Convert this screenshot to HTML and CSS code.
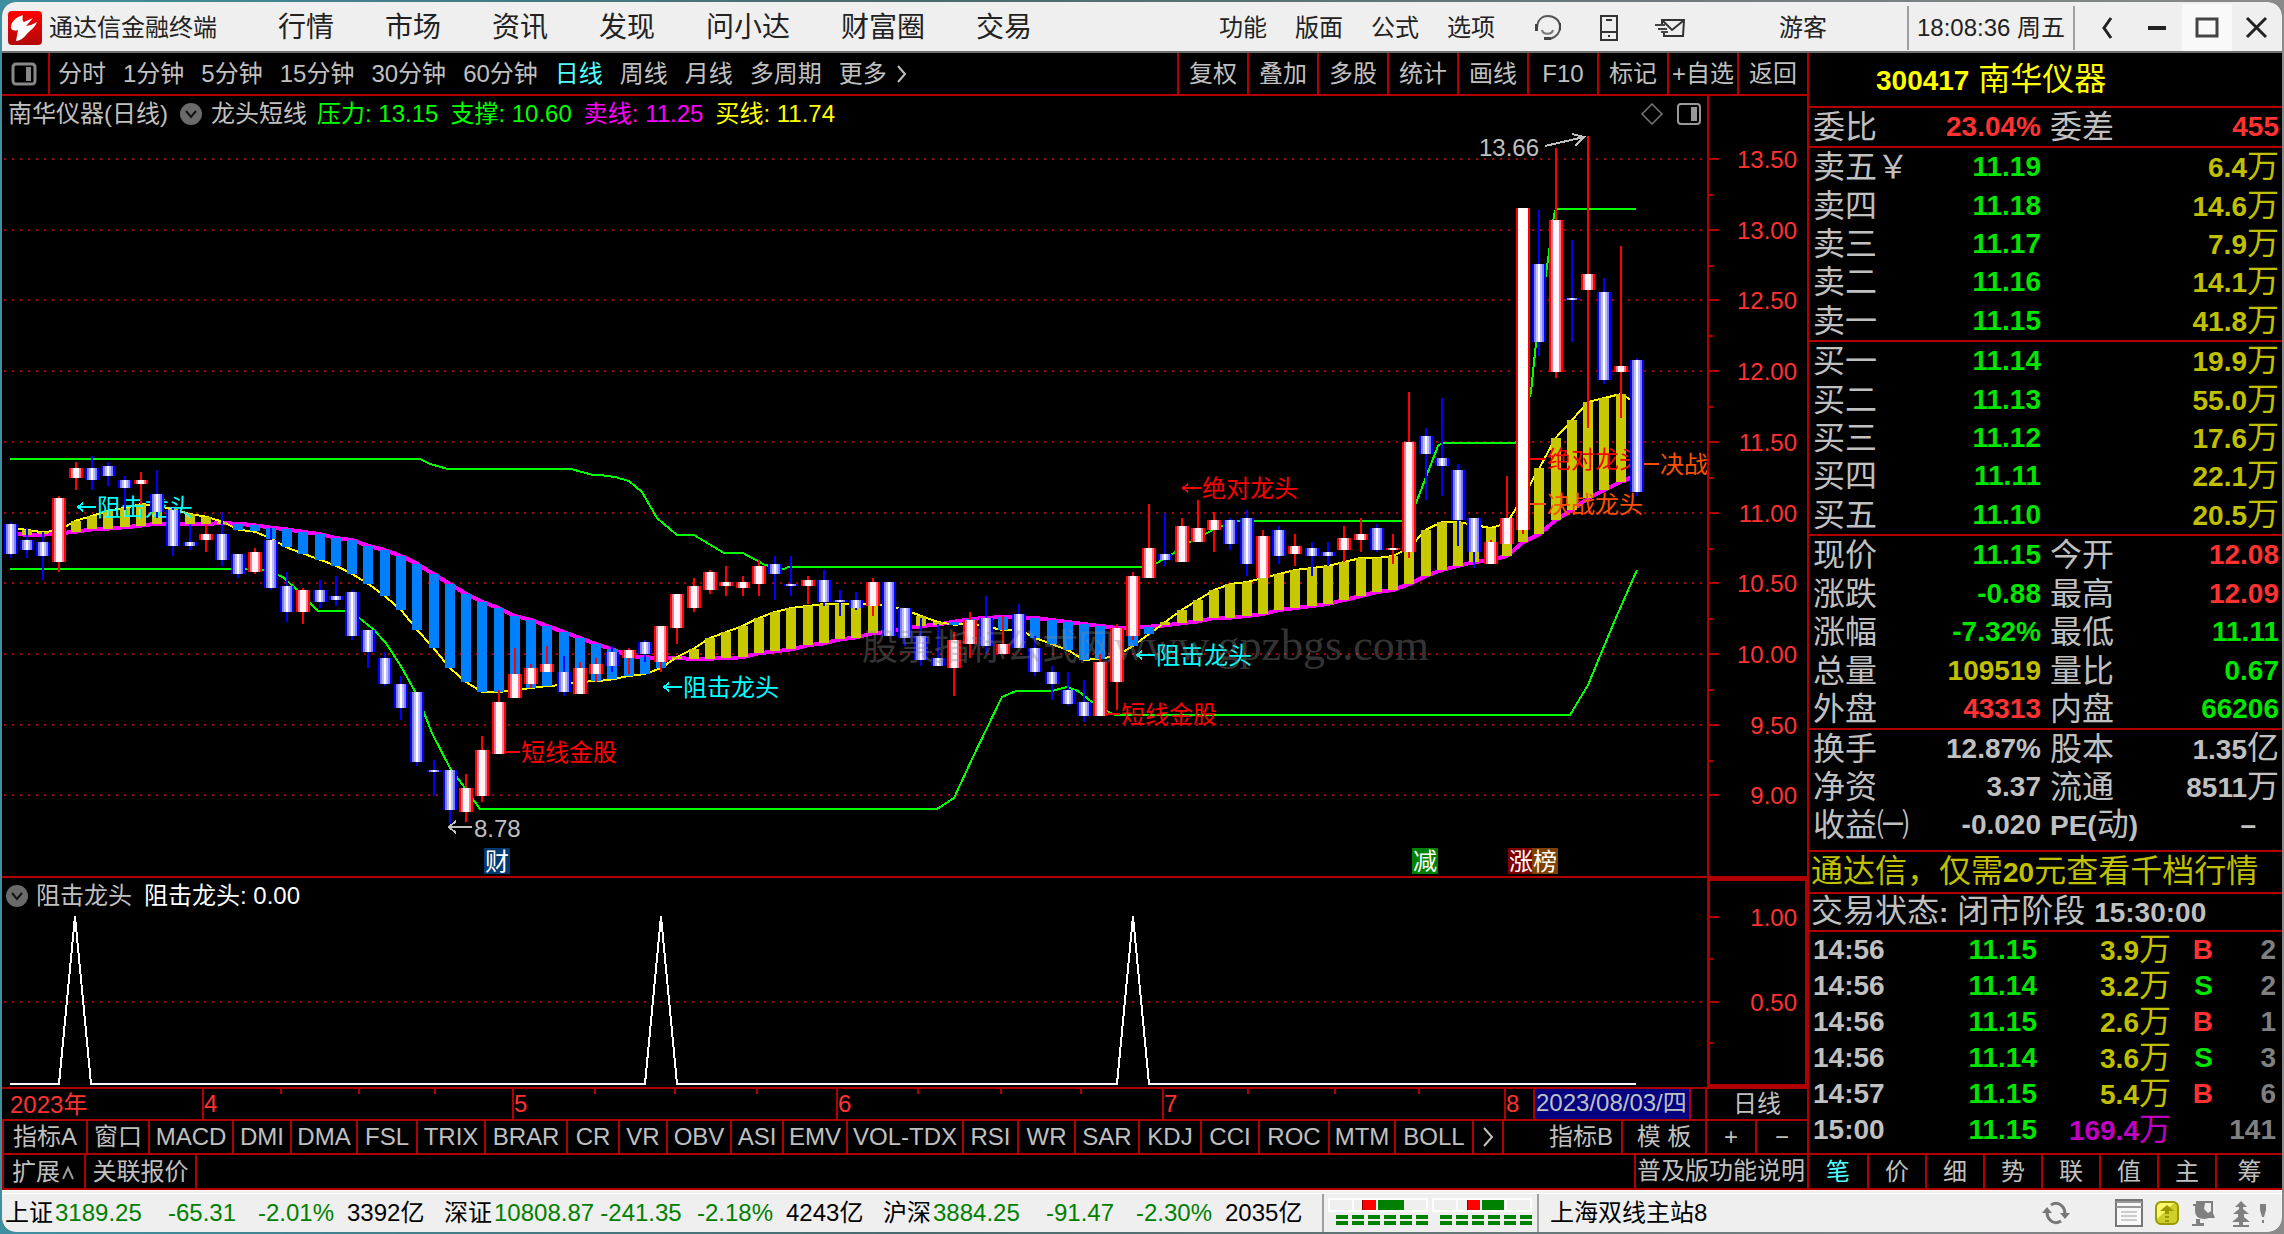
FILE: index.html
```html
<!DOCTYPE html>
<html lang="zh-CN">
<head>
<meta charset="utf-8">
<title>通达信金融终端</title>
<link rel="stylesheet" href="styles.css">
</head>
<body>
<div class="window">
  <header class="titlebar">
    <svg class="logo" viewBox="0 0 34 34"><defs><linearGradient id="lg" x1="0" y1="0" x2="0" y2="1"><stop offset="0" stop-color="#f00"/><stop offset="1" stop-color="#b00808"/></linearGradient></defs><rect width="34" height="34" rx="4" fill="url(#lg)"/><path d="M15 4C8 6 3 11 3 16c0 4 4 4 7 3l-2 11c3 0 8-3 10-6 4-5 9-7 11-13l-6 3-5 1 7-8-9 4c-1 0-2-3-1-7z" fill="#fff"/></svg>
    <span class="app-name">通达信金融终端</span>
    <nav class="main-menu">
      <button>行情</button><button>市场</button><button>资讯</button><button>发现</button><button>问小达</button><button>财富圈</button><button>交易</button>
    </nav>
    <nav class="sub-menu">
      <button>功能</button><button>版面</button><button>公式</button><button>选项</button>
    </nav>
    <div class="title-icons">
      <button aria-label="客服"><svg viewBox="0 0 30 28" width="30" height="28"><path d="M4 15C4 6 9 2 15 2s12 4 12 11c0 6-4 10-10 12" fill="none" stroke="#555" stroke-width="2"/><path d="M9 16c1 5 10 5 11 0" fill="none" stroke="#777" stroke-width="2"/><path d="M2 10h3v7H2zM26 9h2v7h-2zM11 23h7v3h-7z" fill="#444"/></svg></button>
      <button aria-label="手机"><svg viewBox="0 0 30 28" width="30" height="28"><path d="M7 2h16v24H7zM7 18h16M12 6h6M14 22h2" fill="none" stroke="#333" stroke-width="2"/></svg></button>
      <button aria-label="邮件"><svg viewBox="0 0 30 28" width="30" height="28"><path d="M7 10V6h22l-1 16H9v-3M8 7l9 9 11-9" fill="none" stroke="#333" stroke-width="2"/><path d="M0 10h10v2H0zM3 14h9v2H3zM6 17h7v2H6z" fill="#444"/></svg></button>
    </div>
    <button class="user">游客</button>
    <time class="clock">18:08:36 周五</time>
    <div class="win-buttons">
      <button aria-label="收起"><svg viewBox="0 0 24 24" width="24" height="24"><path d="M16 2L9 12l7 10" fill="none" stroke="#222" stroke-width="3"/></svg></button>
      <button aria-label="最小化"><svg viewBox="0 0 24 24" width="24" height="24"><path d="M3 12h18" stroke="#222" stroke-width="4"/></svg></button>
      <button aria-label="最大化" class="hot"><svg viewBox="0 0 24 24" width="24" height="24"><path d="M2 3h20v17H2z" fill="none" stroke="#444" stroke-width="3"/></svg></button>
      <button aria-label="关闭"><svg viewBox="0 0 24 24" width="24" height="24"><path d="M2 2l19 19M21 2L2 21" stroke="#222" stroke-width="3"/></svg></button>
    </div>
  </header>

  <main class="body">
    <section class="left">
      <div class="toolbar">
        <button class="panel-toggle" aria-label="侧栏"><svg viewBox="0 0 26 24" width="26" height="24"><rect x="2" y="2" width="22" height="20" rx="3" fill="none" stroke="#888" stroke-width="3"/><path d="M15 5h5v14h-5z" fill="#888"/></svg></button>
        <nav class="periods">
          <button>分时</button><button>1分钟</button><button>5分钟</button><button>15分钟</button><button>30分钟</button><button>60分钟</button><button class="on">日线</button><button>周线</button><button>月线</button><button>多周期</button><button class="more">更多<svg viewBox="0 0 12 24" width="12" height="24"><path d="M3 4l7 8-7 8" fill="none" stroke="#c0c0c0" stroke-width="2"/></svg></button>
        </nav>
        <nav class="tools">
          <button>复权</button><button>叠加</button><button>多股</button><button>统计</button><button>画线</button><button>F10</button><button>标记</button><button>+自选</button><button>返回</button>
        </nav>
      </div>

      <div class="pane pane-main">
        <svg class="chart" id="kline" role="img" aria-label="南华仪器日线图"></svg>
        <div class="pane-head">
          <span>南华仪器(日线)</span>
          <button class="fold" aria-label="指标菜单"><svg viewBox="0 0 22 22" width="22" height="22"><circle cx="11" cy="11" r="11" fill="#6a6a6a"/><path d="M6 8l5 6 5-6" fill="none" stroke="#111" stroke-width="2"/></svg></button>
          <span>龙头短线</span>
          <span class="v1">压力: 13.15</span><span class="v1 next">支撑: 10.60</span><span class="v2 next">卖线: 11.25</span><span class="v3 next">买线: 11.74</span>
          <span class="head-icons">
            <svg viewBox="0 0 22 22" width="22" height="22"><path d="M11 1l10 10-10 10L1 11z" fill="none" stroke="#777" stroke-width="1.500"/></svg>
            <svg viewBox="0 0 24 22" width="24" height="22"><rect x="1" y="1" width="22" height="20" rx="3" fill="none" stroke="#999" stroke-width="2"/><path d="M14 4h6v14h-6z" fill="#999"/></svg>
          </span>
        </div>
      </div>

      <div class="pane pane-sub">
        <svg class="chart" id="signal" role="img" aria-label="阻击龙头指标"></svg>
        <div class="pane-head sub">
          <button class="fold" aria-label="指标菜单"><svg viewBox="0 0 22 22" width="22" height="22"><circle cx="11" cy="11" r="11" fill="#6a6a6a"/><path d="M6 8l5 6 5-6" fill="none" stroke="#111" stroke-width="2"/></svg></button>
          <span>阻击龙头</span><span class="v4 next">阻击龙头: 0.00</span>
        </div>
      </div>

      <div class="dates">
        <svg class="chart" id="dates"></svg>
        <button class="cycle">日线</button>
      </div>

      <div class="strip">
        <button class="w84">指标A</button><button class="w62">窗口</button><button class="w84">MACD</button><button class="w58">DMI</button><button class="w66">DMA</button><button class="w60">FSL</button><button class="w68">TRIX</button><button class="w82">BRAR</button><button class="w52">CR</button><button class="w48">VR</button><button class="w64">OBV</button><button class="w52">ASI</button><button class="w64">EMV</button><button class="w116">VOL-TDX</button><button class="w55">RSI</button><button class="w57">WR</button><button class="w64">SAR</button><button class="w62">KDJ</button><button class="w58">CCI</button><button class="w70">ROC</button><button class="w66">MTM</button><button class="w78">BOLL</button><button class="w30" aria-label="更多指标"><svg viewBox="0 0 12 24" width="12" height="24"><path d="M2 3l8 9-8 9" fill="none" stroke="#c0c0c0" stroke-width="2"/></svg></button><button class="grow">指标B</button><button class="w84">模 板</button><button class="w50">+</button><button class="w50 last">−</button>
      </div>
      <div class="strip ext">
        <button class="w82">扩展<svg viewBox="0 0 16 24" width="16" height="24"><path d="M3 19l5-11 5 11" fill="none" stroke="#999" stroke-width="2"/></svg></button><button class="w111">关联报价</button><a class="help" href="#help">普及版功能说明</a>
      </div>
    </section>

    <aside class="quote">
      <h1><b>300417</b> 南华仪器</h1>
      <table class="box one"><tr><th>委比</th><td class="r">23.04%</td><th>委差</th><td class="r">455</td></tr></table>
      <table class="box">
        <tr><th>卖五￥</th><td class="g">11.19</td><th></th><td class="y">6.4<i>万</i></td></tr>
        <tr><th>卖四</th><td class="g">11.18</td><th></th><td class="y">14.6<i>万</i></td></tr>
        <tr><th>卖三</th><td class="g">11.17</td><th></th><td class="y">7.9<i>万</i></td></tr>
        <tr><th>卖二</th><td class="g">11.16</td><th></th><td class="y">14.1<i>万</i></td></tr>
        <tr><th>卖一</th><td class="g">11.15</td><th></th><td class="y">41.8<i>万</i></td></tr>
      </table>
      <table class="box">
        <tr><th>买一</th><td class="g">11.14</td><th></th><td class="y">19.9<i>万</i></td></tr>
        <tr><th>买二</th><td class="g">11.13</td><th></th><td class="y">55.0<i>万</i></td></tr>
        <tr><th>买三</th><td class="g">11.12</td><th></th><td class="y">17.6<i>万</i></td></tr>
        <tr><th>买四</th><td class="g">11.11</td><th></th><td class="y">22.1<i>万</i></td></tr>
        <tr><th>买五</th><td class="g">11.10</td><th></th><td class="y">20.5<i>万</i></td></tr>
      </table>
      <table class="box">
        <tr><th>现价</th><td class="g">11.15</td><th>今开</th><td class="r">12.08</td></tr>
        <tr><th>涨跌</th><td class="g">-0.88</td><th>最高</th><td class="r">12.09</td></tr>
        <tr><th>涨幅</th><td class="g">-7.32%</td><th>最低</th><td class="g">11.11</td></tr>
        <tr><th>总量</th><td class="y">109519</td><th>量比</th><td class="g">0.67</td></tr>
        <tr><th>外盘</th><td class="r">43313</td><th>内盘</th><td class="g">66206</td></tr>
      </table>
      <table class="box tall">
        <tr><th>换手</th><td>12.87%</td><th>股本</th><td>1.35<i>亿</i></td></tr>
        <tr><th>净资</th><td>3.37</td><th>流通</th><td>8511<i>万</i></td></tr>
        <tr><th>收益㈠</th><td>-0.020</td><th><b>PE(</b>动<b>)</b></th><td class="dash">–</td></tr>
      </table>
      <a class="promo" href="#level2">通达信，仅需<b>20</b>元查看千档行情</a>
      <p class="state">交易状态<b>:</b> 闭市阶段 <b>15:30:00</b></p>
      <table class="ticks">
        <tr><td>14:56</td><td class="g">11.15</td><td class="y">3.9<i>万</i></td><td class="r">B</td><td>2</td></tr>
        <tr><td>14:56</td><td class="g">11.14</td><td class="y">3.2<i>万</i></td><td class="g">S</td><td>2</td></tr>
        <tr><td>14:56</td><td class="g">11.15</td><td class="y">2.6<i>万</i></td><td class="r">B</td><td>1</td></tr>
        <tr><td>14:56</td><td class="g">11.14</td><td class="y">3.6<i>万</i></td><td class="g">S</td><td>3</td></tr>
        <tr><td>14:57</td><td class="g">11.15</td><td class="y">5.4<i>万</i></td><td class="r">B</td><td>6</td></tr>
        <tr><td>15:00</td><td class="g">11.15</td><td class="m">169.4<i>万</i></td><td></td><td>141</td></tr>
      </table>
      <nav class="quote-tabs">
        <button class="on">笔</button><button>价</button><button>细</button><button>势</button><button>联</button><button>值</button><button>主</button><button>筹</button>
      </nav>
    </aside>
  </main>

  <footer class="status">
    <div class="index"><span>上证</span><span class="dn">3189.25</span><span class="dn mid">-65.31</span><span class="dn mid">-2.01%</span><span>3392亿</span></div>
    <div class="index"><span>深证</span><span class="dn">10808.87</span><span class="dn mid">-241.35</span><span class="dn mid">-2.18%</span><span>4243亿</span></div>
    <div class="index"><span>沪深</span><span class="dn">3884.25</span><span class="dn mid">-91.47</span><span class="dn mid">-2.30%</span><span>2035亿</span></div>
    <div class="meters">
      <svg viewBox="0 0 100 32" width="100" height="32" shape-rendering="crispEdges"><path d="M1 2h98v12H1zM25 2v12" fill="none" stroke="#fff" stroke-width="2"/><path d="M34 3h1v10h-1z" fill="#800"/><path d="M35 3h13v10H35z" fill="#f00"/><path d="M50 3h26v10H50z" fill="#008000"/><path d="M8 20h92M8 26h92" stroke="#008000" stroke-width="4" stroke-dasharray="12 4"/></svg>
      <svg viewBox="0 0 100 32" width="100" height="32" shape-rendering="crispEdges"><path d="M1 2h98v12H1zM25 2v12" fill="none" stroke="#fff" stroke-width="2"/><path d="M35 3h1v10h-1z" fill="#800"/><path d="M36 3h12v10H36z" fill="#f00"/><path d="M50 3h22v10H50z" fill="#008000"/><path d="M74 2v12" stroke="#fff" stroke-width="2"/><path d="M8 20h92M8 26h92" stroke="#008000" stroke-width="4" stroke-dasharray="12 4"/></svg>
    </div>
    <span class="server">上海双线主站8</span>
    <div class="tray">
      <button class="sync" aria-label="刷新"><svg viewBox="0 0 28 24" width="28" height="24"><path d="M9 4q6-4 11 1 3 3 3 8M5 11q0 5 3 8 5 5 11 1" fill="none" stroke="#777" stroke-width="3"/><path d="M18 12h10l-5 6zM0 12h10L5 6z" fill="#777"/></svg></button>
      <button aria-label="列表"><svg viewBox="0 0 28 28" width="28" height="28"><path d="M1 1h26v26H1z" fill="#f8f8f8" stroke="#777" stroke-width="2"/><path d="M1 3h26M1 8h26" stroke="#999" stroke-width="2"/><path d="M6 13h16M6 17h16M6 21h16" stroke="#ccc" stroke-width="2"/></svg></button>
      <button aria-label="升级"><svg viewBox="0 0 26 28" width="26" height="28"><rect x="2" y="3" width="22" height="22" rx="5" fill="#cfcf2c" stroke="#999a00" stroke-width="2"/><path d="M3 20V7l3-3h14z" fill="#fbf86a"/><path d="M13 6l7 6h-5v3h-4v-3H6zM11 17h4v2h-4zM11 21h4v2h-4z" fill="#999a00"/></svg></button>
      <button aria-label="信号"><svg viewBox="0 0 26 28" width="26" height="28"><path d="M5 2h17v12l2 5h-6l-4 1c-8 0-10-4-10-9V7H2V5h3zM5 20h4v4h4v3H1v-2h4z" fill="#808080"/><path d="M14 4h6v8l-3 2-4-4z" fill="#eee"/></svg></button>
      <button aria-label="置顶"><svg viewBox="0 0 26 28" width="26" height="28"><path d="M13 2l6 6h-4v2l6 5h-5v3l6 5h-7v3h6v2H5v-2h6v-3H4l6-5v-3H5l6-5V8H7z" fill="#808080"/></svg></button>
      <button class="alert" aria-label="提醒"><svg viewBox="0 0 8 28" width="8" height="28"><path d="M1 5h6v6L5 18H3L1 11zM3 21h2v3H3z" fill="#808080"/></svg></button>
    </div>
  </footer>
</div>
<script src="script.js"></script>
</body>
</html>
```
FILE: styles.css
```css
* { box-sizing: border-box; margin: 0; padding: 0; }
html { height: 100%; }
body {
  min-height: 100vh;
  display: flex;
  padding: 2px;
  background: linear-gradient(90deg, #3f8fa0, #4a6a6c 40%, #8a8a8a);
  font: 24px/32px "Liberation Sans", "Noto Sans CJK SC", sans-serif;
  color: #c0c0c0;
}
button { background: none; border: 0; font: inherit; color: inherit; white-space: nowrap; cursor: pointer; }
a { color: inherit; text-decoration: none; white-space: nowrap; }
svg { display: block; flex: none; }
table { border-collapse: collapse; table-layout: fixed; width: 100%; }
i { font-style: normal; }

.window { flex: 1; min-width: 0; display: flex; flex-direction: column; background: #000; border-radius: 14px; overflow: hidden; }

/* title bar */
.titlebar { display: flex; align-items: center; height: 51px; padding: 2px 0 0 6px; background: #efefef; border-bottom: 2px solid #707070; color: #222; white-space: nowrap; }
.logo { width: 34px; height: 34px; }
.app-name { margin-left: 7px; }
.main-menu { display: flex; gap: 51px; margin-left: 61px; font-size: 28px; }
.sub-menu { display: flex; gap: 28px; margin-left: auto; }
.title-icons { display: flex; gap: 31px; margin: 0 68px 0 38px; }
.user { width: 100px; margin-right: 54px; }
.clock { width: 168px; line-height: 44px; text-align: center; border: solid #a0a0a0; border-width: 0 2px; margin-right: 7px; }
.win-buttons { display: flex; }
.win-buttons button { width: 50px; height: 47px; display: grid; place-items: center; }
.win-buttons .hot { background: #f9f9f9; }

/* layout */
.body { flex: 1; display: grid; grid-template-columns: minmax(0, 1fr) 475px; }
.left { display: flex; flex-direction: column; min-width: 0; }

.toolbar { display: flex; height: 43px; border-bottom: 2px solid #b00000; }
.panel-toggle { width: 48px; padding-left: 9px; border-right: 2px solid #b00000; }
.periods { display: flex; align-items: center; gap: 17px; padding-left: 8px; }
.periods .more { display: flex; align-items: center; gap: 8px; }
.on { color: #54ffff; }
.tools { display: flex; margin-left: auto; }
.tools button { width: 70px; border-left: 2px solid #b00000; }

/* chart panes */
.pane { display: grid; grid-template-columns: minmax(0, 1fr); border-bottom: 2px solid #b00000; min-height: 0; }
.pane > * { grid-area: 1 / 1; }
.pane-main { flex: 782 1 0; }
.pane-sub { flex: 210 1 0; }
.chart { width: 100%; height: 100%; min-width: 0; min-height: 0; overflow: hidden; contain: size; }
.pane-head { align-self: start; display: flex; align-items: center; height: 36px; margin-right: 100px; padding-left: 6px; white-space: nowrap; z-index: 1; }
.pane-head .fold { margin: 0 9px 0 12px; }
.pane-head .v1:not(.next) { margin-left: 10px; }
.pane-head.sub .fold { margin-left: -2px; margin-right: 8px; }
.next { margin-left: 12px; }
.v1 { color: #00ff00; }
.v2 { color: #ff00ff; }
.v3 { color: #ffff00; }
.v4 { color: #fff; }
.head-icons { display: flex; gap: 14px; margin: 0 6px 0 auto; }

.dates { display: flex; height: 32px; border-bottom: 2px solid #b00000; }
.dates .chart { flex: 1; }
.cycle { width: 100px; line-height: 28px; }

/* indicator strip */
.strip { display: flex; height: 34px; border-bottom: 2px solid #b00000; border-left: 2px solid #b00000; }
.strip.ext { height: 35px; }
.strip button { border-right: 2px solid #b00000; text-align: center; display: flex; align-items: center; justify-content: center; }
.strip .last { border-right: 0; }
.strip .grow { flex: 1; justify-content: flex-end; padding-right: 8px; }
.w30 { width: 30px; } .w48 { width: 48px; } .w50 { width: 50px; } .w52 { width: 52px; }
.w55 { width: 55px; } .w57 { width: 57px; } .w58 { width: 58px; } .w60 { width: 60px; }
.w62 { width: 62px; } .w64 { width: 64px; } .w66 { width: 66px; } .w68 { width: 68px; }
.w70 { width: 70px; } .w78 { width: 78px; } .w82 { width: 82px; } .w84 { width: 84px; }
.w111 { width: 111px; } .w116 { width: 116px; }
.help { margin-left: auto; width: 173px; padding-left: 1px; border-left: 2px solid #b00000; }

/* quote panel */
.quote { display: flex; flex-direction: column; border-left: 2px solid #b00000; white-space: nowrap; }
.quote h1 { height: 55px; line-height: 53px; border-bottom: 2px solid #b00000; color: #ff0; font-size: 32px; font-weight: 400; padding-left: 67px; }
.quote b, .quote td { font-size: 28px; font-weight: 700; }
.quote th, .quote i { font-size: 32px; font-weight: 400; }
.box { border-bottom: 2px solid #b00000; height: 194px; }
.box.one { height: 40px; }
.box.tall { height: 114px; border-bottom: 0; margin-bottom: 6px; }
.box tr { height: 38px; }
.box th { width: 108px; line-height: 36px; text-align: left; padding-left: 4px; }
.box td { width: 124px; line-height: 36px; text-align: right; }
.box th:nth-child(3) { padding-left: 9px; }
.box td:last-child { width: auto; padding-right: 3px; }
.box td.dash { padding-right: 26px; }
.r { color: #ff3232; }
.g { color: #00e600; }
.y { color: #c0c000; }
.m { color: #c000c0; }
.promo { height: 44px; line-height: 38px; font-size: 32px; color: #c0c000; padding-left: 2px; border: solid #b00000; border-width: 2px 0; overflow: hidden; }
.state { height: 38px; line-height: 34px; font-size: 32px; padding-left: 2px; border-bottom: 2px solid #b00000; overflow: hidden; }
.ticks tr { height: 36px; }
.ticks td { line-height: 34px; text-align: right; }
.ticks td:nth-child(1) { width: 120px; text-align: left; padding-left: 4px; }
.ticks td:nth-child(2) { width: 108px; }
.ticks td:nth-child(3) { width: 134px; }
.ticks td:nth-child(4) { width: 46px; text-align: right; padding-right: 4px; }
.ticks td:nth-child(5) { color: #808080; padding-right: 6px; }
.quote-tabs { display: flex; height: 37px; margin-top: auto; border: solid #b00000; border-width: 2px 0; }
.quote-tabs button { width: 58px; }
.quote-tabs button:last-child { flex: 1; }
.quote-tabs button + button { border-left: 2px solid #b00000; }

/* status bar */
.status { display: flex; align-items: center; height: 42px; padding-left: 3px; background: #efefef; border-top: 4px double #fff; color: #000; white-space: nowrap; }
.index { display: grid; grid-template-columns: 50px 104px 86px 102px 97px; }
.dn { color: #008000; }
.mid { text-align: center; }
.meters { display: flex; align-items: center; gap: 4px; height: 100%; padding: 0 5px 0 4px; border: solid #a0a0a0; border-width: 0 2px; }
.server { padding-left: 11px; }
.tray { display: flex; align-items: center; gap: 11px; margin: 0 15px 0 auto; }
.tray .sync { margin-right: 34px; }
.tray .alert { margin-left: -6px; }
```
FILE: script.js
```js
// Daily candles, one row per bar: [high, bodyTop, bodyBottom, low, up].
// Values are screen ticks measured down from the top of the price scale.
// up: 0 falling, 1 rising, 2 limit-up.
const LOWER = 960;
const early = [
[246,252,342,354,0],[264,300,330,354,0],[276,306,348,420,0],[168,174,366,396,1],[66,84,114,150,1],
[48,84,120,150,0],[66,78,108,138,0],[108,120,144,210,0],[96,120,132,192,1],[90,162,216,234,0],
[204,210,318,348,0],[252,306,318,330,0],[252,282,300,336,1],[216,282,360,378,0],[342,342,402,414,0],
[324,336,396,402,1],[264,300,444,450,0],[396,438,516,546,0],[444,450,516,552,1],[420,450,486,504,0],
[408,468,480,498,0],[450,456,588,600,0],[570,570,636,684,0],[636,654,732,738,0],[708,732,804,840,0],
[756,756,966,978,0],[960,990,996,1068,0],[990,990,1110,1152,0],[1002,1044,1116,1146,1],[888,930,1068,1086,1],
[750,786,942,942,1],[624,702,774,774,1],[672,684,732,744,1],[618,672,696,696,1],[648,696,756,768,0],
[666,684,762,762,1],[654,672,702,726,1],[618,636,678,696,0],[624,630,654,702,1],[600,606,642,666,0],
[558,558,666,696,1],[462,462,564,612,1],[414,438,504,516,1],[390,396,450,462,1],[378,426,438,468,1],
[408,426,444,468,1],[360,378,432,468,1],[348,372,402,480,0],[348,432,438,468,0],[408,420,438,492,1],
[390,420,486,498,0],[450,480,486,528,0],[456,480,504,510,0],[414,426,498,528,1],[426,426,588,588,0],
[504,504,594,618,0],[534,588,660,678,0],[552,654,678,678,0],[576,600,684,768,1],[516,540,612,654,1],
[468,534,618,642,0],[528,612,642,642,1],[492,522,624,624,0],[588,624,696,708,0],[678,696,732,780,0],
[696,750,792,798,0],[720,786,828,846,0],[642,666,828,828,1],[552,564,726,810,1],[396,408,588,600,1],
[192,324,414,414,1],[220,342,360,378,0],[234,258,366,366,1],[180,264,306,306,1]
].map(c => [c[0] + LOWER, c[1] + LOWER, c[2] + LOWER, c[3] + LOWER, c[4]]);
const late = [
[1176,1200,1230,1296,1],[1194,1200,1272,1290,0],[1170,1194,1332,1368,0],[1230,1248,1374,1374,1],[1218,1230,1308,1332,0],
[1242,1278,1302,1338,1],[1266,1284,1308,1368,0],[1266,1296,1308,1338,0],[1218,1254,1290,1326,1],[1194,1242,1260,1296,1],
[1212,1224,1290,1296,0],[1242,1284,1290,1332,1],[816,966,1296,1314,1],[924,948,1002,1140,0],[834,1014,1038,1128,0],
[1032,1050,1200,1278,0],[1194,1194,1296,1344,0],[1260,1266,1332,1332,1],[1068,1194,1272,1272,1],[264,264,1230,1242,2],
[270,432,666,708,0],[84,300,756,774,1],[360,534,540,666,0],[48,462,510,924,1],[474,516,780,792,0],
[378,738,756,894,1],[714,720,1116,1128,0]];
const candles = early.concat(late);

// [short average, long average]
const averages = [
[262,282],[270,284],[277,284],[270,280],[242,275],[228,268],[212,266],[204,262],[192,257],[197,251],[208,251],[222,251],
[230,251],[245,250],[269,251],[275,256],[295,263],[323,268],[341,276],[359,282],[377,294],[402,300],[432,318],[468,330],
[510,348],[570,372],[624,402],[684,432],[726,462],[756,486],[756,504],[750,528],[744,540],[738,558],[735,576],[725,594],
[724,612],[718,628],[708,648],[702,652],[684,654],[650,655],[626,656],[594,656],[576,654],[558,652],[534,640],[516,634],
[504,628],[498,616],[492,610],[493,598],[494,592],[490,580],[498,575],[510,566],[528,558],[546,554],[554,545],[552,538],
[560,533],[570,532],[568,532],[594,534],[612,540],[630,546],[660,552],[656,558],[648,564],[618,564],[582,560],[546,556],
[510,550],[480,544],[450,534],[432,533],[426,528],[414,522],[402,510],[390,504],[384,498],[378,492],[366,480],[354,468],
[354,456],[348,450],[324,432],[270,408],[246,390],[246,378],[255,366],[264,360],[250,348],[170,306],[84,282],[-6,240],
[-60,210],[-114,175],[-126,150],[-138,126],[-110,105]].map(a => [a[0] + LOWER, a[1] + LOWER]);

const resistance = [[10,459],[420,459],[430,464],[448,469],[571,469],[593,475],[600,475],[615,477],[629,481],[642,492],[657,518],[677,535],[694,535],[724,553],[743,553],[765,565],[784,569],[788,567],[1142,567],[1157,563],[1174,553],[1188,543],[1213,530],[1234,521],[1402,521],[1416,503],[1438,446],[1442,443],[1516,443],[1531,392],[1536,343],[1547,267],[1554,215],[1556,209],[1636,209]];
const support = [[10,569],[230,569],[264,570],[283,577],[297,590],[318,611],[344,611],[358,617],[373,629],[386,643],[402,668],[417,695],[432,733],[450,768],[465,788],[480,809],[937,809],[954,798],[973,757],[1002,697],[1016,691],[1052,691],[1067,687],[1078,691],[1092,702],[1107,711],[1115,715],[1570,715],[1588,685],[1615,620],[1637,570]];

const RED = '#b00000', AXIS = 100, PLOT = 1705;
const BODY = ['url(#down)', 'url(#up)', 'url(#limit)'];

function rect(x, y, w, h, fill) {
  return `<rect x="${Math.round(x)}" y="${Math.round(y)}" width="${Math.round(w)}" height="${Math.max(2, Math.round(h))}" fill="${fill}"/>`;
}
function line(points, color, width, dash) {
  return `<polyline points="${points.map(p => p.join()).join(' ')}" fill="none" stroke="${color}" stroke-width="${width}"${dash ? ` stroke-dasharray="${dash}"` : ''}/>`;
}
function text(x, y, value, fill, anchor = 'start') {
  return `<text x="${x}" y="${y}" fill="${fill}" text-anchor="${anchor}" font-size="24">${value}</text>`;
}

function drawKline() {
  const svg = document.getElementById('kline');
  const W = svg.clientWidth, H = svg.clientHeight, plot = W - AXIS;
  const X = x => (x - 2) * plot / PLOT;
  const Y = y => (y - 96) * H / 780;
  const cx = i => X(10.7 + i * 16.263);
  const ty = t => Y(120 + t / 3);
  const kx = plot / PLOT;
  let s = `<defs>
    <linearGradient id="up"><stop offset=".15" stop-color="#f00"/><stop offset=".15" stop-color="#ff7890"/><stop offset=".3" stop-color="#ff7890"/><stop offset=".3" stop-color="#fff6fa"/><stop offset=".7" stop-color="#fff6fa"/><stop offset=".7" stop-color="#ff7890"/><stop offset=".85" stop-color="#ff7890"/><stop offset=".85" stop-color="#f00"/></linearGradient>
    <linearGradient id="limit"><stop offset=".15" stop-color="#f00"/><stop offset=".15" stop-color="#fff"/><stop offset=".85" stop-color="#fff"/><stop offset=".85" stop-color="#f00"/></linearGradient>
    <linearGradient id="down"><stop offset=".15" stop-color="#00f"/><stop offset=".15" stop-color="#8080ff"/><stop offset=".29" stop-color="#8080ff"/><stop offset=".29" stop-color="#c0c0ff"/><stop offset=".43" stop-color="#c0c0ff"/><stop offset=".43" stop-color="#fff"/><stop offset=".57" stop-color="#fff"/><stop offset=".57" stop-color="#c0c0ff"/><stop offset=".71" stop-color="#c0c0ff"/><stop offset=".71" stop-color="#8080ff"/><stop offset=".85" stop-color="#8080ff"/><stop offset=".85" stop-color="#00f"/></linearGradient>
    <clipPath id="plot"><rect width="${plot}" height="${H}"/></clipPath></defs><g shape-rendering="crispEdges">`;
  for (let i = 0; i <= 9; i++) {
    const y = Math.round(Y(159 + i * 70.7));
    s += line([[2, y], [plot, y]], RED, 2, '2 6') + rect(plot, y - 1, 12, 2, RED);
    if (i < 9) s += rect(plot, Y(194 + i * 70.7), 6, 2, RED);
    s += text(W - 10, y + 9, (13.5 - i / 2).toFixed(2), '#ff3232', 'end');
  }
  s += '<g clip-path="url(#plot)">';
  s += line(averages.map((a, i) => [cx(i), ty(a[1])]), '#ff00ff', 4);
  s += line(averages.map((a, i) => [cx(i), ty(a[0])]), '#ffff00', 2);
  averages.forEach(([a, b], i) => {
    const top = Math.min(a, b), gap = Math.abs(a - b);
    if (i) s += rect(cx(i) - 5 * kx, ty(top), 10 * kx, gap * H / 2340, a < b ? '#c8c800' : '#0080ff');
  });
  s += line(resistance.map(p => [X(p[0]), Y(p[1])]), '#00ff00', 2);
  s += line(support.map(p => [X(p[0]), Y(p[1])]), '#00ff00', 2);
  const notes = [[76,507,'←','阻击龙头','#00ffff'],[662,687,'←','阻击龙头','#00ffff'],[1135,655,'←','阻击龙头','#00ffff'],
    [500,752,'–','短线金股','#ff0000'],[1100,714,'–','短线金股','#ff0000'],[1181,488,'←','绝对龙头','#ff0000'],
    [1526,459,'–','绝对龙头','#ff0000'],[1526,504,'–','决战龙头','#ff5000'],[1639,464,'–','决战龙头','#ff5000']];
  for (const [x, y, mark, label, color] of notes) {
    const px = X(x), py = Math.round(Y(y));
    s += line([[px + 2, py], [px + 20, py]], color, 2);
    if (mark === '←') s += line([[px + 7, py - 4], [px + 2, py], [px + 7, py + 4]], color, 2);
    s += text(px + 21, py + 9, label, color);
  }
  candles.forEach(([hi, top, bottom, lo, up], i) => {
    const x = Math.round(cx(i)), k = H / 2340;
    s += rect(x - 1, ty(hi), 2, (lo - hi) * k, up ? '#f00' : '#00f');
    s += rect(x - 7 * kx, ty(top), 14 * kx, (bottom - top) * k, BODY[up]);
  });
  s += '</g>' + rect(plot, 0, 2, H, RED);
  s += line([[X(1545), Y(146)], [X(1584), Y(137)]], '#c0c0c0', 2) + line([[X(1572), Y(134)], [X(1584), Y(137)], [X(1575), Y(146)]], '#c0c0c0', 2);
  s += line([[X(450), Y(827)], [X(472), Y(827)]], '#c0c0c0', 2) + line([[X(456), Y(821)], [X(449), Y(827)], [X(456), Y(833)]], '#c0c0c0', 2);
  s += text(X(1539), Y(156), '13.66', '#c0c0c0', 'end') + text(X(474), Y(837), '8.78', '#c0c0c0');
  for (const [x, label, bg] of [[484,'财','#003870'],[1412,'减','#008000'],[1508,'涨','#800000'],[1532,'榜','#804000']])
    s += rect(X(x), Y(848), 26, 26, bg) + text(X(x) + 1, Y(870), label, '#fff');
  s += `</g><text class="mark" x="${X(862)}" y="${Y(660)}" fill="#888" fill-opacity=".4" font-size="36" font-family="Liberation Serif, Noto Sans CJK SC, serif">股票指标公式网<tspan font-size="44">www.gpzbgs.com</tspan></text>`;
  svg.innerHTML = s;
}

function drawSignal() {
  const svg = document.getElementById('signal');
  const W = svg.clientWidth, H = svg.clientHeight, plot = W - AXIS;
  const X = x => (x - 2) * plot / PLOT;
  const Y = y => (y - 878) * H / 208;
  let s = '<g shape-rendering="crispEdges">';
  s += line([[2, Y(1001)], [plot, Y(1001)]], RED, 2, '2 6');
  const pts = [[10, 1083]];
  for (const x of [75, 661, 1133]) pts.push([x - 16, 1083], [x, 916], [x + 16, 1083]);
  pts.push([1636, 1083]);
  s += line(pts.map(p => [X(p[0]), Y(p[1])]), '#fff', 2);
  s += `<path d="M${plot + 1} 1H${W - 1}V${H - 2}H${plot + 1}z" fill="none" stroke="${RED}" stroke-width="3"/>`;
  for (const [y, w] of [[917, 10], [959, 4], [1001, 10], [1042, 4]]) s += rect(plot + 2, Y(y) - 1, w, 2, RED);
  s += text(W - 10, Y(926), '1.00', '#ff3232', 'end') + text(W - 10, Y(1010), '0.50', '#ff3232', 'end') + '</g>';
  svg.innerHTML = s;
}

function drawDates() {
  const svg = document.getElementById('dates');
  const W = svg.clientWidth, X = x => (x - 2) * W / PLOT;
  let s = '<g shape-rendering="crispEdges">' + text(X(10), 24, '2023年', '#ff3232');
  for (const [x, label] of [[203, 4], [513, 5], [837, 6], [1163, 7], [1505, 8]])
    s += rect(X(x) - 1, 0, 2, 30, RED) + text(X(x) + 1, 23, label, '#ff3232');
  for (const x of [281, 359, 435, 595, 675, 757, 918, 1001, 1081, 1248, 1335, 1419]) s += rect(X(x) - 1, 0, 2, 5, RED);
  s += rect(X(1533), 0, 158, 30, RED) + rect(X(1533) + 2, 0, 154, 30, '#000080');
  s += text(X(1533) + 3, 22, '2023/08/03/四', '#c0c0c0') + rect(W - 2, 0, 2, 30, RED) + '</g>';
  svg.innerHTML = s;
}

function draw() { drawKline(); drawSignal(); drawDates(); }
draw();
window.addEventListener('resize', draw);
```
